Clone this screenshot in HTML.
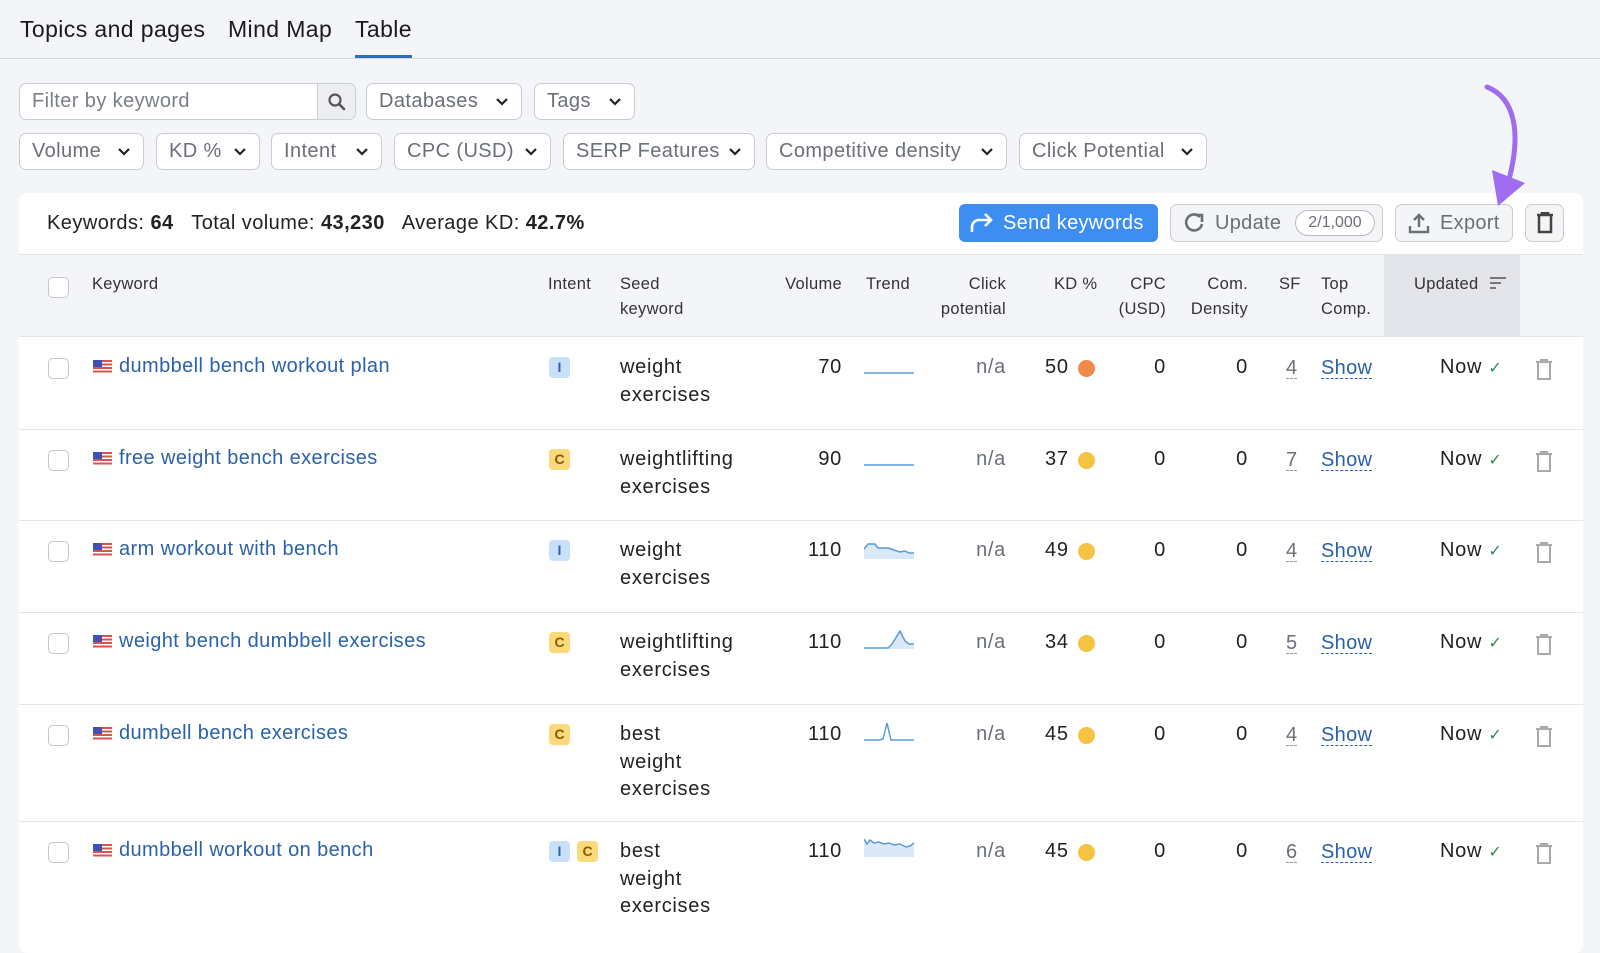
<!DOCTYPE html>
<html><head><meta charset="utf-8"><style>
*{box-sizing:border-box;margin:0;padding:0}
body{width:1600px;height:935px;overflow:hidden;background:#f4f5f9;font-family:"Liberation Sans",sans-serif;color:#222;position:relative}
.a{position:absolute;white-space:nowrap}
.tab{font-size:23px;letter-spacing:0.4px;top:16px;color:#1a1a1a}
.btn{position:absolute;height:37px;border:1px solid #c9ccd3;border-radius:7px;background:#fff;font-size:20px;letter-spacing:0.4px;color:#6b6f78;padding-left:12px;line-height:35px;white-space:nowrap}
.btn svg{position:absolute;right:12px;top:13px}
.card{position:absolute;left:19px;top:193px;width:1564px;height:760px;background:#fff;border-radius:8px}
.hdr{position:absolute;left:19px;top:254px;width:1564px;height:83px;background:#f4f5f9;border-top:1px solid #e3e5ea;border-bottom:1px solid #e3e5ea}
.th{position:absolute;font-size:16.5px;letter-spacing:0.3px;color:#333;line-height:24.5px;top:272px}
.r{text-align:right}
.cb{position:absolute;width:21px;height:21px;border:1.5px solid #c4c7ce;border-radius:5px;background:#fff}
.sep{position:absolute;left:19px;width:1564px;height:1px;background:#e3e5ea}
.kw{position:absolute;font-size:20px;letter-spacing:0.4px;color:#2b62a8;white-space:nowrap}
.flag{position:absolute;width:19px;height:13px;background:repeating-linear-gradient(#d9534f 0 2px,#fff 2px 3.5px)}
.flag:after{content:"";position:absolute;left:0;top:0;width:9px;height:7px;background:#3f51b5}
.bd{position:absolute;width:21px;height:21px;border-radius:4px;font-size:14px;font-weight:bold;text-align:center;line-height:21px}
.bi{background:#c9e0fa;color:#2e64b0}
.bc{background:#fcd97a;color:#8a5a00}
.tx{position:absolute;font-size:20px;letter-spacing:0.7px;color:#222;line-height:27.5px;white-space:nowrap}
.g{color:#6b6f78}
.dot{position:absolute;width:17px;height:17px;border-radius:50%}
.sf{position:absolute;font-size:20px;color:#6b6f78;border-bottom:1.5px dashed #999;line-height:20px}
.show{position:absolute;font-size:20px;letter-spacing:0.3px;color:#2b62a8;border-bottom:1.5px dashed #2b62a8;line-height:20px}
</style></head><body>
<div class="a tab" style="left:20px">Topics and pages</div>
<div class="a tab" style="left:228px">Mind Map</div>
<div class="a tab" style="left:355px">Table</div>
<div class="a" style="left:355px;top:55px;width:57px;height:4px;background:#2d6cc0"></div>
<div class="a" style="left:0;top:58px;width:1600px;height:1px;background:#d6d8de"></div>

<div class="btn" style="left:19px;top:83px;width:337px;color:#7a7e87">Filter by keyword<div style="position:absolute;right:0;top:0;width:38px;height:35px;background:#eceef2;border-left:1px solid #c9ccd3;border-radius:0 6px 6px 0"><svg width="20" height="20" viewBox="0 0 20 20" style="position:absolute;left:9px;top:8px"><circle cx="8" cy="8" r="5.5" fill="none" stroke="#555" stroke-width="2.2"/><path d="M12 12l5 5" stroke="#555" stroke-width="2.6" stroke-linecap="round"/></svg></div></div>
<div class="btn" style="left:366px;top:83px;width:156px">Databases<svg width="14" height="10"><path d="M2 2l5 5 5-5" fill="none" stroke="#222" stroke-width="2.2"/></svg></div>
<div class="btn" style="left:534px;top:83px;width:101px">Tags<svg width="14" height="10"><path d="M2 2l5 5 5-5" fill="none" stroke="#222" stroke-width="2.2"/></svg></div>

<div class="btn" style="left:19px;top:133px;width:125px">Volume<svg width="14" height="10"><path d="M2 2l5 5 5-5" fill="none" stroke="#222" stroke-width="2.2"/></svg></div>
<div class="btn" style="left:156px;top:133px;width:104px">KD %<svg width="14" height="10"><path d="M2 2l5 5 5-5" fill="none" stroke="#222" stroke-width="2.2"/></svg></div>
<div class="btn" style="left:271px;top:133px;width:111px">Intent<svg width="14" height="10"><path d="M2 2l5 5 5-5" fill="none" stroke="#222" stroke-width="2.2"/></svg></div>
<div class="btn" style="left:394px;top:133px;width:157px">CPC (USD)<svg width="14" height="10"><path d="M2 2l5 5 5-5" fill="none" stroke="#222" stroke-width="2.2"/></svg></div>
<div class="btn" style="left:563px;top:133px;width:192px">SERP Features<svg width="14" height="10"><path d="M2 2l5 5 5-5" fill="none" stroke="#222" stroke-width="2.2"/></svg></div>
<div class="btn" style="left:766px;top:133px;width:241px">Competitive density<svg width="14" height="10"><path d="M2 2l5 5 5-5" fill="none" stroke="#222" stroke-width="2.2"/></svg></div>
<div class="btn" style="left:1019px;top:133px;width:188px">Click Potential<svg width="14" height="10"><path d="M2 2l5 5 5-5" fill="none" stroke="#222" stroke-width="2.2"/></svg></div>

<div class="card"></div>
<div class="a" style="left:47px;top:212px;font-size:20px;letter-spacing:0.45px">Keywords: <b>64</b>&nbsp;&nbsp; Total volume: <b>43,230</b>&nbsp;&nbsp; Average KD: <b>42.7%</b></div>

<div class="a" style="left:959px;top:204px;width:199px;height:38px;background:#3d8ef0;border-radius:6px;color:#fff;font-size:20px;letter-spacing:0.3px;line-height:38px;padding-left:44px">Send keywords<svg width="26" height="22" viewBox="0 0 26 22" style="position:absolute;left:10px;top:8px"><path d="M3 20v-5a7 7 0 0 1 7-7h12M16 2l6 6-6 6" fill="none" stroke="#fff" stroke-width="2.6"/></svg></div>
<div class="a" style="left:1170px;top:204px;width:213px;height:38px;background:#f4f5f7;border:1px solid #c9ccd3;border-radius:7px;color:#6b6f78;font-size:20px;letter-spacing:0.3px;line-height:36px;padding-left:44px">Update<span style="position:absolute;left:124px;top:5px;height:26px;width:80px;border:1px solid #b7bac2;border-radius:13px;background:#fff;font-size:16px;letter-spacing:0;line-height:24px;text-align:center">2/1,000</span><svg width="22" height="22" viewBox="0 0 22 22" style="position:absolute;left:12px;top:7px"><path d="M17 5A8 8 0 1 0 19 12" fill="none" stroke="#6b6f78" stroke-width="2.6"/><path d="M12 3h7v7" fill="none" stroke="#6b6f78" stroke-width="2.6"/></svg></div>
<div class="a" style="left:1395px;top:204px;width:118px;height:38px;background:#f4f5f7;border:1px solid #c9ccd3;border-radius:7px;color:#6b6f78;font-size:20px;letter-spacing:0.3px;line-height:36px;padding-left:44px">Export<svg width="22" height="22" viewBox="0 0 22 22" style="position:absolute;left:12px;top:7px"><path d="M11 15V3M6 8l5-5 5 5M2 14v6h18v-6" fill="none" stroke="#6b6f78" stroke-width="2.4"/></svg></div>
<div class="a" style="left:1525px;top:204px;width:39px;height:38px;background:#f4f5f7;border:1px solid #c9ccd3;border-radius:7px"><svg width="18" height="22" viewBox="0 0 18 22" style="position:absolute;left:10px;top:7px"><path d="M1 3h16M6 3V1h6v2M3 4v16h12V4" fill="none" stroke="#444" stroke-width="2.5"/></svg></div>

<svg class="a" style="left:1470px;top:78px" width="70" height="135" viewBox="0 0 70 135"><path d="M17 9C45 20 52 55 38 105" fill="none" stroke="#a06cf0" stroke-width="5" stroke-linecap="round"/><path d="M22 92L55 105L28 128Z" fill="#a06cf0"/></svg>

<div class="hdr"></div>
<div class="a" style="left:1384px;top:255px;width:136px;height:81px;background:#e3e5ea"></div>
<div class="cb" style="left:48px;top:277px"></div>
<div class="th" style="left:92px">Keyword</div>
<div class="th" style="left:548px">Intent</div>
<div class="th" style="left:620px">Seed<br>keyword</div>
<div class="th r" style="left:760px;width:82px">Volume</div>
<div class="th" style="left:866px">Trend</div>
<div class="th r" style="left:900px;width:106px">Click<br>potential</div>
<div class="th" style="left:1054px">KD %</div>
<div class="th r" style="left:1100px;width:66px">CPC<br>(USD)</div>
<div class="th r" style="left:1170px;width:78px">Com.<br>Density</div>
<div class="th" style="left:1279px">SF</div>
<div class="th" style="left:1321px">Top<br>Comp.</div>
<div class="th" style="left:1414px">Updated</div>
<svg class="a" style="left:1490px;top:276px" width="16" height="14"><path d="M0 2h16M0 7h11M0 12h6" stroke="#777" stroke-width="2"/></svg>

<div class="sep" style="top:429px"></div>
<div class="sep" style="top:520px"></div>
<div class="sep" style="top:612px"></div>
<div class="sep" style="top:704px"></div>
<div class="sep" style="top:821px"></div>

<!-- row1 -->
<div class="cb" style="left:48px;top:358px"></div><div class="flag" style="left:93px;top:360px"></div>
<div class="kw" style="left:119px;top:355px">dumbbell bench workout plan</div>
<div class="bd bi" style="left:549px;top:357px">I</div>
<div class="tx" style="left:620px;top:354px">weight<br>exercises</div>
<div class="tx r" style="left:780px;width:62px;top:354px">70</div>
<svg class="a" style="left:864px;top:358px" width="51" height="20"><path d="M0 15H50" stroke="#5b9bd5" stroke-width="1.5"/></svg>
<div class="tx g r" style="left:940px;width:66px;top:354px">n/a</div>
<div class="tx" style="left:1045px;top:354px">50</div><div class="dot" style="left:1078px;top:360px;background:#f08a4b"></div>
<div class="tx r" style="left:1130px;width:36px;top:354px">0</div>
<div class="tx r" style="left:1210px;width:38px;top:354px">0</div>
<div class="sf" style="left:1286px;top:358px">4</div><div class="show" style="left:1321px;top:358px">Show</div>
<div class="tx" style="left:1440px;top:354px">Now <span style="color:#2e8b57;font-size:16px">✓</span></div>
<svg class="a" style="left:1535px;top:359px" width="18" height="22" viewBox="0 0 18 22"><path d="M1 3h16M6 3V1h6v2M3 4v16h12V4" fill="none" stroke="#aaa" stroke-width="2"/></svg>

<!-- row2 -->
<div class="cb" style="left:48px;top:450px"></div><div class="flag" style="left:93px;top:452px"></div>
<div class="kw" style="left:119px;top:447px">free weight bench exercises</div>
<div class="bd bc" style="left:549px;top:449px">C</div>
<div class="tx" style="left:620px;top:446px">weightlifting<br>exercises</div>
<div class="tx r" style="left:780px;width:62px;top:446px">90</div>
<svg class="a" style="left:864px;top:450px" width="51" height="20"><path d="M0 15H50" stroke="#5b9bd5" stroke-width="1.5"/></svg>
<div class="tx g r" style="left:940px;width:66px;top:446px">n/a</div>
<div class="tx" style="left:1045px;top:446px">37</div><div class="dot" style="left:1078px;top:452px;background:#f5c242"></div>
<div class="tx r" style="left:1130px;width:36px;top:446px">0</div>
<div class="tx r" style="left:1210px;width:38px;top:446px">0</div>
<div class="sf" style="left:1286px;top:450px">7</div><div class="show" style="left:1321px;top:450px">Show</div>
<div class="tx" style="left:1440px;top:446px">Now <span style="color:#2e8b57;font-size:16px">✓</span></div>
<svg class="a" style="left:1535px;top:451px" width="18" height="22" viewBox="0 0 18 22"><path d="M1 3h16M6 3V1h6v2M3 4v16h12V4" fill="none" stroke="#aaa" stroke-width="2"/></svg>

<!-- row3 -->
<div class="cb" style="left:48px;top:541px"></div><div class="flag" style="left:93px;top:543px"></div>
<div class="kw" style="left:119px;top:538px">arm workout with bench</div>
<div class="bd bi" style="left:549px;top:540px">I</div>
<div class="tx" style="left:620px;top:537px">weight<br>exercises</div>
<div class="tx r" style="left:780px;width:62px;top:537px">110</div>
<svg class="a" style="left:864px;top:541px" width="51" height="20"><path d="M0 18V8L4 3H11L14 7H24L30 9L36 11L41 10L45 12H50V18Z" fill="#dbe8f7"/><path d="M0 8L4 3H11L14 7H24L30 9L36 11L41 10L45 12H50" fill="none" stroke="#5b9bd5" stroke-width="1.5"/></svg>
<div class="tx g r" style="left:940px;width:66px;top:537px">n/a</div>
<div class="tx" style="left:1045px;top:537px">49</div><div class="dot" style="left:1078px;top:543px;background:#f5c242"></div>
<div class="tx r" style="left:1130px;width:36px;top:537px">0</div>
<div class="tx r" style="left:1210px;width:38px;top:537px">0</div>
<div class="sf" style="left:1286px;top:541px">4</div><div class="show" style="left:1321px;top:541px">Show</div>
<div class="tx" style="left:1440px;top:537px">Now <span style="color:#2e8b57;font-size:16px">✓</span></div>
<svg class="a" style="left:1535px;top:542px" width="18" height="22" viewBox="0 0 18 22"><path d="M1 3h16M6 3V1h6v2M3 4v16h12V4" fill="none" stroke="#aaa" stroke-width="2"/></svg>

<!-- row4 -->
<div class="cb" style="left:48px;top:633px"></div><div class="flag" style="left:93px;top:635px"></div>
<div class="kw" style="left:119px;top:630px">weight bench dumbbell exercises</div>
<div class="bd bc" style="left:549px;top:632px">C</div>
<div class="tx" style="left:620px;top:629px">weightlifting<br>exercises</div>
<div class="tx r" style="left:780px;width:62px;top:629px">110</div>
<svg class="a" style="left:864px;top:630px" width="51" height="22"><path d="M0 18H24L28 14L36 1L41 11L45 14H50V19H0Z" fill="#dbe8f7"/><path d="M0 18H24L28 14L36 1L41 11L45 14H50" fill="none" stroke="#5b9bd5" stroke-width="1.5"/></svg>
<div class="tx g r" style="left:940px;width:66px;top:629px">n/a</div>
<div class="tx" style="left:1045px;top:629px">34</div><div class="dot" style="left:1078px;top:635px;background:#f5c242"></div>
<div class="tx r" style="left:1130px;width:36px;top:629px">0</div>
<div class="tx r" style="left:1210px;width:38px;top:629px">0</div>
<div class="sf" style="left:1286px;top:633px">5</div><div class="show" style="left:1321px;top:633px">Show</div>
<div class="tx" style="left:1440px;top:629px">Now <span style="color:#2e8b57;font-size:16px">✓</span></div>
<svg class="a" style="left:1535px;top:634px" width="18" height="22" viewBox="0 0 18 22"><path d="M1 3h16M6 3V1h6v2M3 4v16h12V4" fill="none" stroke="#aaa" stroke-width="2"/></svg>

<!-- row5 -->
<div class="cb" style="left:48px;top:725px"></div><div class="flag" style="left:93px;top:727px"></div>
<div class="kw" style="left:119px;top:722px">dumbell bench exercises</div>
<div class="bd bc" style="left:549px;top:724px">C</div>
<div class="tx" style="left:620px;top:721px">best<br>weight<br>exercises</div>
<div class="tx r" style="left:780px;width:62px;top:721px">110</div>
<svg class="a" style="left:864px;top:721px" width="51" height="22"><path d="M0 19H15L19 18L23 2L27 19H50" fill="none" stroke="#5b9bd5" stroke-width="1.5"/></svg>
<div class="tx g r" style="left:940px;width:66px;top:721px">n/a</div>
<div class="tx" style="left:1045px;top:721px">45</div><div class="dot" style="left:1078px;top:727px;background:#f5c242"></div>
<div class="tx r" style="left:1130px;width:36px;top:721px">0</div>
<div class="tx r" style="left:1210px;width:38px;top:721px">0</div>
<div class="sf" style="left:1286px;top:725px">4</div><div class="show" style="left:1321px;top:725px">Show</div>
<div class="tx" style="left:1440px;top:721px">Now <span style="color:#2e8b57;font-size:16px">✓</span></div>
<svg class="a" style="left:1535px;top:726px" width="18" height="22" viewBox="0 0 18 22"><path d="M1 3h16M6 3V1h6v2M3 4v16h12V4" fill="none" stroke="#aaa" stroke-width="2"/></svg>

<!-- row6 -->
<div class="cb" style="left:48px;top:842px"></div><div class="flag" style="left:93px;top:844px"></div>
<div class="kw" style="left:119px;top:839px">dumbbell workout on bench</div>
<div class="bd bi" style="left:549px;top:841px">I</div><div class="bd bc" style="left:577px;top:841px">C</div>
<div class="tx" style="left:620px;top:838px">best<br>weight<br>exercises</div>
<div class="tx r" style="left:780px;width:62px;top:838px">110</div>
<svg class="a" style="left:864px;top:837px" width="51" height="22"><path d="M0 2L3 7L6 3L10 6L15 5L20 7L25 6L30 8L36 7L42 10L46 9L50 6V20H0Z" fill="#dbe8f7"/><path d="M0 2L3 7L6 3L10 6L15 5L20 7L25 6L30 8L36 7L42 10L46 9L50 6" fill="none" stroke="#5b9bd5" stroke-width="1.5"/></svg>
<div class="tx g r" style="left:940px;width:66px;top:838px">n/a</div>
<div class="tx" style="left:1045px;top:838px">45</div><div class="dot" style="left:1078px;top:844px;background:#f5c242"></div>
<div class="tx r" style="left:1130px;width:36px;top:838px">0</div>
<div class="tx r" style="left:1210px;width:38px;top:838px">0</div>
<div class="sf" style="left:1286px;top:842px">6</div><div class="show" style="left:1321px;top:842px">Show</div>
<div class="tx" style="left:1440px;top:838px">Now <span style="color:#2e8b57;font-size:16px">✓</span></div>
<svg class="a" style="left:1535px;top:843px" width="18" height="22" viewBox="0 0 18 22"><path d="M1 3h16M6 3V1h6v2M3 4v16h12V4" fill="none" stroke="#aaa" stroke-width="2"/></svg>
</body></html>
